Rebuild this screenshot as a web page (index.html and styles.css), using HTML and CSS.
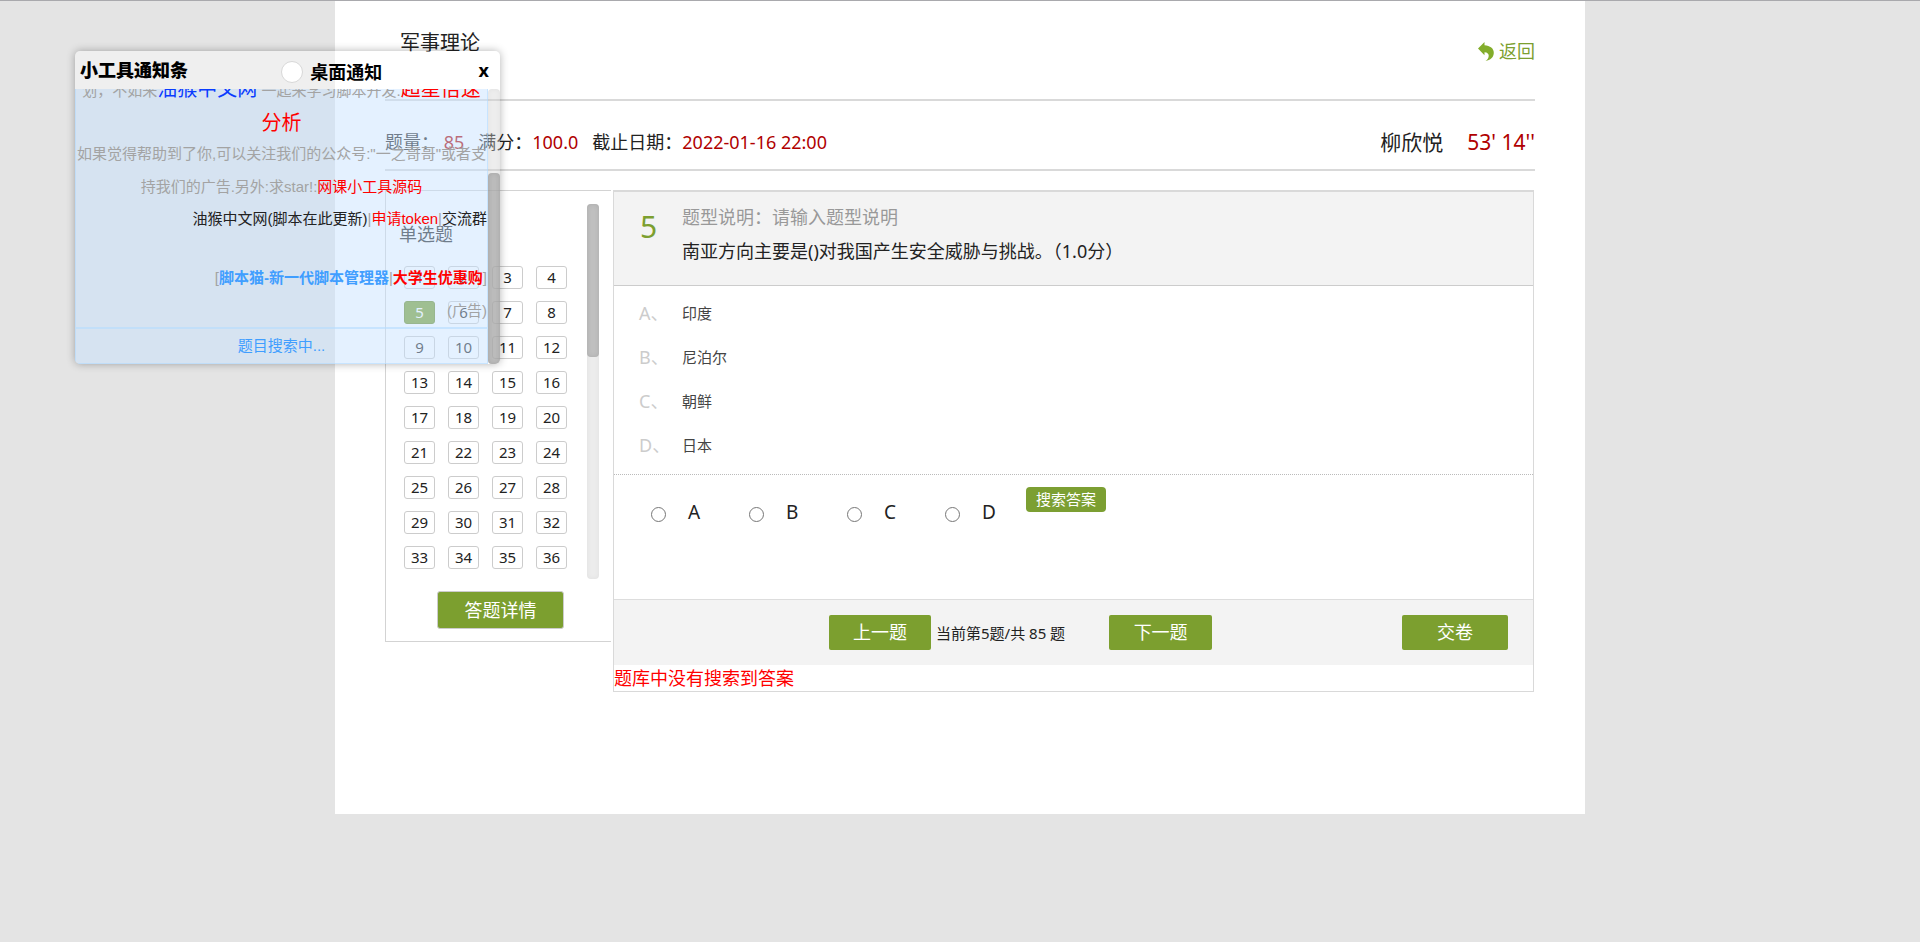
FILE: index.html
```html
<!DOCTYPE html>
<html lang="zh-CN">
<head>
<meta charset="utf-8">
<title>军事理论</title>
<link rel="stylesheet" href="styles.css">
</head>
<body>
<div class="page">
  <header class="top">
    <h1 class="top-title">军事理论</h1>
    <a class="back" href="#">
      <svg class="back-icon" viewBox="0 0 16 19" aria-hidden="true"><path d="M0 6.500 6.500 0V3.300C12 3.600 16 6.500 15.800 11 15.600 15.500 12.500 18 7.500 19 11.500 16.500 12.500 10.500 6.500 10.200V13.300Z"/></svg>
      <span>返回</span>
    </a>
  </header>

  <section class="info">
    <div class="facts">
      <span>题量： <em>85</em></span>
      <span>满分：<em>100.0</em></span>
      <span>截止日期：<em>2022-01-16 22:00</em></span>
    </div>
    <div class="student">
      <span>柳欣悦</span>
      <em>53' 14''</em>
    </div>
  </section>

  <main class="exam">
    <aside class="sheet">
      <div class="sheet-scroll">
        <div class="sheet-list">
          <h2 class="sheet-title">单选题</h2>
          <div class="numbers">
            <button>1</button><button>2</button><button>3</button><button>4</button>
            <button class="current">5</button><button>6</button><button>7</button><button>8</button>
            <button>9</button><button>10</button><button>11</button><button>12</button>
            <button>13</button><button>14</button><button>15</button><button>16</button>
            <button>17</button><button>18</button><button>19</button><button>20</button>
            <button>21</button><button>22</button><button>23</button><button>24</button>
            <button>25</button><button>26</button><button>27</button><button>28</button>
            <button>29</button><button>30</button><button>31</button><button>32</button>
            <button>33</button><button>34</button><button>35</button><button>36</button>
          </div>
        </div>
        <div class="track"><div class="thumb"></div></div>
      </div>
      <button class="btn detail">答题详情</button>
    </aside>

    <section class="question">
      <div class="stem">
        <div class="stem-no">5</div>
        <div class="stem-text">
          <p class="hint">题型说明：请输入题型说明</p>
          <p>南亚方向主要是()对我国产生安全威胁与挑战。（1.0分）</p>
        </div>
      </div>
      <dl class="options">
        <dt>A、</dt><dd>印度</dd>
        <dt>B、</dt><dd>尼泊尔</dd>
        <dt>C、</dt><dd>朝鲜</dd>
        <dt>D、</dt><dd>日本</dd>
      </dl>
      <div class="answer">
        <div class="choices">
          <label><input type="radio" name="answer" value="A">A</label>
          <label><input type="radio" name="answer" value="B">B</label>
          <label><input type="radio" name="answer" value="C">C</label>
          <label><input type="radio" name="answer" value="D">D</label>
        </div>
        <button class="search">搜索答案</button>
      </div>
      <div class="pager">
        <button class="btn prev">上一题</button>
        <span class="progress">当前第5题/共 85 题</span>
        <button class="btn next">下一题</button>
        <button class="btn submit">交卷</button>
      </div>
      <p class="result">题库中没有搜索到答案</p>
    </section>
  </main>
</div>

<div class="widget">
  <div class="widget-head">
    <strong class="widget-title">小工具通知条</strong>
    <label class="notify"><input type="checkbox">桌面通知</label>
    <button class="close">x</button>
  </div>
  <div class="widget-main">
    <div class="widget-body">
      <div class="notice">
        <p class="line promo">划，不如来<a class="blue" href="#">油猴中文网</a> 一起来学习脚本开发.<a href="#">超星倍速</a></p>
        <p class="line analysis"><a href="#">分析</a></p>
        <p class="line follow">如果觉得帮助到了你,可以关注我们的公众号:"一之哥哥"或者支</p>
        <p class="line source">持我们的广告.另外:求star!:<a href="#">网课小工具源码</a></p>
        <p class="line links"><a class="dark" href="#">油猴中文网(脚本在此更新)</a>|<a href="#">申请token</a>|<a class="dark" href="#">交流群</a></p>
        <p class="line ads">[<a class="sky" href="#">脚本猫-新一代脚本管理器</a>|<a class="bold" href="#">大学生优惠购</a>]</p>
        <p class="line tag">(广告)</p>
      </div>
      <p class="status">题目搜索中...</p>
    </div>
    <div class="track"><div class="thumb"></div></div>
  </div>
</div>
</body>
</html>
```
FILE: styles.css
```css
* { box-sizing: border-box; }

body {
  margin: 0;
  min-height: 100vh;
  border-top: 1px solid #a9a9ad;
  background: #e4e4e4;
  color: #222;
  font: 18px/34px "Noto Sans", "Noto Sans CJK SC", sans-serif;
}

h1, h2, p, dl, dd { margin: 0; font-weight: 400; }
em { font-style: normal; color: #b00000; }
a { color: #f00; text-decoration: none; }
button { padding: 0; border: 0; font: inherit; cursor: pointer; }

.page {
  max-width: 1250px;
  margin: 0 auto;
  padding: 0 50px 122px;
  background: #fff;
}

.top {
  display: flex;
  justify-content: space-between;
  align-items: flex-start;
  padding: 22px 0 28px 15px;
  border-bottom: 2px solid #d9d9d9;
}
.top-title { font-size: 20px; line-height: 40px; }
.back {
  display: flex;
  align-items: center;
  gap: 5px;
  margin-top: 8px;
  color: #7c9f2f;
  font-size: 18px;
  line-height: 40px;
}
.back-icon { width: 16px; height: 19px; fill: #83ad2b; }

.info {
  display: flex;
  justify-content: space-between;
  align-items: center;
  padding: 24px 0 10px;
  border-bottom: 2px solid #d9d9d9;
}
.facts { display: flex; gap: 14px; }
.student { display: flex; gap: 24px; font-size: 21px; }

.exam {
  display: flex;
  align-items: flex-start;
  gap: 2px;
  margin-top: 19px;
}

.sheet {
  width: 226px;
  padding: 13px 12px 12px 13px;
  border: 1px solid #d3d3d3;
  border-right: 0;
}
.sheet-scroll { display: flex; justify-content: space-between; }
.sheet-list { padding-bottom: 10px; }
.sheet-title { margin-bottom: 2px; font-size: 18px; line-height: 60px; }
.numbers {
  display: grid;
  grid-template-columns: repeat(4, 31px);
  gap: 12px 13px;
  padding-left: 5px;
}
.numbers button {
  height: 23px;
  border: 1px solid #ccc;
  border-radius: 3px;
  background: #fff;
  color: #222;
  font-size: 15px;
  line-height: 21px;
}
.numbers .current { border-color: #6d8f2a; background: #7c9f2f; color: #fff; }

.track {
  width: 12px;
  border-radius: 4px;
  background: #ececec;
  box-shadow: inset 0 0 5px rgba(0, 0, 0, .05);
}
.thumb {
  height: 153px;
  border-radius: 4px;
  background: #bfbfbf;
  box-shadow: inset 0 0 5px rgba(0, 0, 0, .1);
}

.btn {
  height: 35px;
  border-radius: 2px;
  background: #7c9f2f;
  color: #fff;
  font-size: 18px;
  line-height: 35px;
}
.detail {
  display: block;
  width: 127px;
  height: 38px;
  margin: 12px 0 0 38px;
  border: 1px solid #ccc;
  border-radius: 3px;
}

.question {
  flex: 1;
  margin-right: 1px;
  border: 1px solid #d9d9d9;
  border-top-width: 2px;
}
.stem {
  display: grid;
  grid-template-columns: 68px 1fr;
  padding: 8px 0 17px;
  border-bottom: 1px solid #ccc;
  background: #f3f3f3;
}
.stem-no { padding: 10px 0 0 26px; color: #7c9f2f; font-size: 30px; }
.hint { color: #999; }

.options {
  display: grid;
  grid-template-columns: 43px 1fr;
  padding: 5px 0 7px 25px;
  border-bottom: 1px dotted #bbb;
  line-height: 44px;
}
.options dt { color: #ccc; font-size: 18px; }
.options dd { color: #444; font-size: 15px; }

.answer {
  display: flex;
  align-items: flex-start;
  gap: 33px;
  min-height: 124px;
  padding: 12px 37px;
}
.choices { display: flex; gap: 50px; margin-top: 9px; }
.choices label {
  display: flex;
  align-items: center;
  gap: 22px;
  width: 48px;
  font-size: 19px;
  line-height: 32px;
}
.choices input { flex: none; width: 15px; height: 15px; margin: 5px 0 0; }
.search {
  height: 25px;
  padding: 0 10px;
  border-radius: 4px;
  background: #7c9f32;
  color: #fff;
  font-size: 15px;
  line-height: 25px;
}

.pager {
  display: flex;
  align-items: center;
  padding: 15px 25px 15px 215px;
  border-top: 1px solid #ddd;
  background: #f3f3f3;
}
.prev { width: 102px; }
.progress { margin: 0 44px 0 5px; font-size: 15px; }
.next { width: 103px; }
.submit { width: 106px; margin-left: auto; }
.result { color: #f00; line-height: 26px; }

/* Floating notification panel */
.widget {
  position: absolute;
  top: 51px;
  left: 75px;
  width: 425px;
  border-radius: 5px;
  overflow: hidden;
  box-shadow: 0 0 8px rgba(0, 0, 0, .3);
}
.widget-head {
  display: flex;
  align-items: center;
  height: 38px;
  padding: 0 11px 0 5px;
  background: rgba(255, 255, 255, .4);
  color: #000;
  font-size: 18px;
  font-weight: 700;
}
.notify {
  display: flex;
  align-items: center;
  gap: 7px;
  margin: 4px auto 0;
  padding-right: 3px;
}
.notify input {
  appearance: none;
  width: 22px;
  height: 22px;
  margin: 0;
  border: 1px solid #d8d8d8;
  border-radius: 50%;
  background: #fff;
}
.close { background: none; color: #000; font-size: 18px; font-weight: 700; }

.widget-main { display: flex; }
.widget-body {
  flex: 1;
  min-width: 0;
  background: rgba(198, 226, 255, .48);
  border: 1px solid rgba(170, 215, 255, .5);
  border-top: 0;
  color: #a3a3a3;
  font-family: "Liberation Sans", "Noto Sans CJK SC", sans-serif;
  font-size: 15px;
}
.widget .track { background: rgba(210, 210, 210, .4); }
.widget .thumb { height: 191px; margin-top: 84px; background: rgba(160, 160, 160, .65); }
.notice {
  height: 240px;
  border-bottom: 2px solid rgba(180, 220, 255, .6);
  overflow: hidden;
}
.line { line-height: 33px; text-align: center; white-space: nowrap; }
.promo { margin-top: -16px; }
.promo a, .analysis a { font-size: 20px; }
.promo .blue { color: #0a3cff; }
.follow { margin-top: -4px; }
.links, .ads, .tag { text-align: right; }
.links { line-height: 32px; }
.links .dark { color: #222; }
.ads { margin-top: 26px; }
.ads .sky { color: #409eff; font-weight: 700; }
.ads .bold { font-weight: 700; }
.status { color: #409eff; line-height: 34px; text-align: center; }
```
